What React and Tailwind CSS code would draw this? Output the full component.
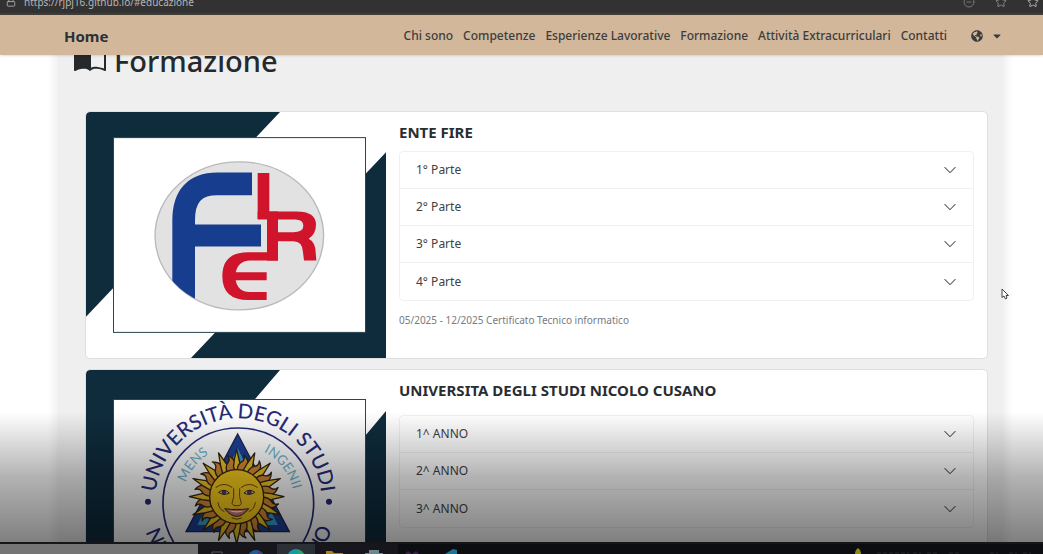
import { BsBookHalf, BsChevronDown } from "react-icons/bs";
import { FaGlobeAmericas, FaCaretDown } from "react-icons/fa";
import { Star, CircleMinus, Lock } from "lucide-react";

const links = [
  "Chi sono",
  "Competenze",
  "Esperienze Lavorative",
  "Formazione",
  "Attività Extracurriculari",
  "Contatti",
];

function AddressBar() {
  return (
    <div className="h-[15px] shrink-0 overflow-hidden border-b-2 border-[#453d33] bg-[#323232] text-[#b5b5b5]">
      <div className="-mt-1.5 flex h-4 items-center pl-1.5 text-[10px] leading-4">
        <Lock className="size-2.5" />
        <span className="ml-2">https://rjpj16.github.io/#educazione</span>
        <CircleMinus className="ml-auto size-3 text-[#777]" />
        <Star className="ml-5 size-3 text-[#888]" />
        <Star className="mr-1 ml-5 size-3" />
      </div>
    </div>
  );
}

function NavBar() {
  return (
    <nav className="relative z-10 flex h-10 shrink-0 items-center bg-[#d2b79b] pt-0.5 pr-10 pl-16 text-[#2b3236] shadow-sm">
      <a href="#home" className="text-[15px] font-bold">
        Home
      </a>
      <div className="ml-auto flex items-center gap-2.5 text-xs font-medium whitespace-nowrap text-[#3b3d3d]">
        {links.map((l) => (
          <a key={l} href="#educazione">
            {l}
          </a>
        ))}
        <button type="button" aria-label="Lingua" className="ml-3.5 flex items-center gap-2">
          <FaGlobeAmericas className="size-3" />
          <FaCaretDown className="size-3" />
        </button>
      </div>
    </nav>
  );
}

function FireImage() {
  return (
    <svg viewBox="0 0 300 245" preserveAspectRatio="none" className="h-[246px] w-[300px] shrink-0" role="img">
      <rect width="300" height="245" fill="#fff" />
      <path d="M0 0H194L0 204Z M300 40V245H105Z" fill="#0f2c3d" />
      <rect x="27.500" y="25.500" width="252" height="194" fill="#fff" stroke="#2c4352" />
      <g transform="scale(0.33333) translate(-18 -21)" fill="none">
        <clipPath id="disc">
          <ellipse cx="478" cy="391" rx="253" ry="221" />
        </clipPath>
        <ellipse cx="478" cy="391" rx="253" ry="221" fill="#e2e2e3" stroke="#b9b9bd" strokeWidth="4" />
        <g clipPath="url(#disc)" stroke="#163d8e">
          <path d="M311 620V345Q311 236 412 236H516" strokeWidth="68" />
          <path d="M311 390H543" strokeWidth="65" />
        </g>
        <g fill="#d0142c">
          <path d="M533 203H568V341H533Z" />
          <path d="M561 318H594V465H561Z" />
          <path d="M533 318H650Q708 318 708 358Q708 385 686 400Q706 410 707 440L709 465H672L669 440Q668 407 640 407H590V380H640Q670 380 670 361Q670 342 645 342H533Z" />
          <path d="M594 440V465H510Q476 465 467 500H560V524H467Q474 560 510 559H560V583H505Q427 583 427 511Q427 440 505 440Z" />
        </g>
      </g>
    </svg>
  );
}

const rays = Array.from({ length: 32 }, (_, i) => i);

function CusanoImage() {
  return (
    <svg viewBox="0 0 300 273" preserveAspectRatio="none" className="h-[273px] w-[300px] shrink-0" role="img">
      <rect width="300" height="273" fill="#fff" />
      <path d="M0 0H194L0 226Z M300 41V273H105Z" fill="#0f2c3d" />
      <rect x="27.500" y="29.500" width="252" height="216" fill="#fff" stroke="#2c4352" />
      <g transform="scale(0.33333) translate(-18 -15)">
        <defs>
          <path id="outer" d="M225 410A250 250 0 0 1 725 410" />
          <path id="lower" d="M183 410A292 292 0 0 0 767 410" />
          <path id="inner" d="M307 410A168 168 0 0 1 643 410" />
        </defs>
        <circle cx="475" cy="415" r="226" fill="none" stroke="#262a78" strokeWidth="5" />
        <g fill="#262a78" fontFamily="Lato, sans-serif" fontSize="61" fontWeight="500">
          <text textAnchor="middle">
            <textPath href="#outer" startOffset="50%">UNIVERSITÀ DEGLI STUDI</textPath>
          </text>
          <text>
            <textPath href="#lower" startOffset="10%">NICCOLÒ</textPath>
          </text>
          <text textAnchor="end">
            <textPath href="#lower" startOffset="91%">CUSANO</textPath>
          </text>
          <circle cx="204" cy="410" r="9" />
          <circle cx="747" cy="410" r="9" />
        </g>
        <g fill="#6fb4cf" fontFamily="Lato, sans-serif" fontSize="40">
          <text>
            <textPath href="#inner" startOffset="11%">MENS</textPath>
          </text>
          <text>
            <textPath href="#inner" startOffset="65%">INGENII</textPath>
          </text>
        </g>
        <path d="M473 207L628 500H318Z" fill="#1d3f96" stroke="#1b2550" strokeWidth="4" />
        <path d="M473 250L502 308H444Z M352 480L372 442L398 480Z M594 480L574 442L548 480Z" fill="#39a0cf" />
        <path d="M473 276L488 308H458Z" fill="#1d3f96" />
        <g transform="translate(470 395)" stroke="#33260f" strokeLinejoin="round">
          {rays.map((i) => (
            <path
              key={i}
              transform={`rotate(${i * 11.25})`}
              d={
                i % 2
                  ? "M-13 -74Q-18 -96 -5 -106Q4 -114 -3 -127Q19 -112 11 -98Q5 -88 13 -74Z"
                  : "M-13 -74L-9 -104L0 -142L9 -104L13 -74Z"
              }
              fill={i % 2 ? "#d98a35" : "#f0c52a"}
              strokeWidth="4"
            />
          ))}
          <circle r="81" fill="#f8cb1d" strokeWidth="4" />
          <g fill="none" strokeWidth="3" strokeLinecap="round" stroke="#6b4811">
            <path d="M-62 -28Q-38 -46 -14 -28M14 -28Q38 -46 62 -28" />
            <path d="M-9 -24Q-6 2 -14 20Q-10 30 0 27Q10 30 14 20Q6 2 9 -24" />
            <path d="M-56 18Q-52 40 -38 44M56 18Q52 40 38 44M-14 64Q0 72 14 64" />
          </g>
          <path d="M-54 -13Q-38 -26 -22 -11Q-38 -2 -54 -13ZM54 -13Q38 -26 22 -11Q38 -2 54 -13Z" fill="#f3e4cb" strokeWidth="3" />
          <circle cx="-38" cy="-13" r="6" fill="#54417a" strokeWidth="2" />
          <circle cx="38" cy="-13" r="6" fill="#54417a" strokeWidth="2" />
          <path d="M-36 36Q-12 40 0 38Q12 40 36 36Q18 59 0 59Q-18 59 -36 36Z" fill="#cf7777" strokeWidth="3" />
          <path d="M-26 41Q0 47 26 41Q0 54 -26 41Z" fill="#fff" stroke="none" />
        </g>
      </g>
    </svg>
  );
}

function Card({ image, title, titleClass, items, note }) {
  return (
    <article className="flex items-start overflow-hidden rounded bg-white outline outline-[#dfdfdf]">
      {image}
      <div className="min-w-0 flex-1 px-[13px] pt-2.5">
        <h3 className={`text-[15px] leading-5 font-bold text-[#2a2d30] ${titleClass}`}>{title}</h3>
        <div className="divide-y divide-black/6 rounded border border-black/6">
          {items.map((t) => (
            <button
              key={t}
              type="button"
              className="flex h-[37px] w-full items-center justify-between px-4 text-xs text-[#3e4145]"
            >
              {t}
              <BsChevronDown className="size-3.5 text-[#555]" />
            </button>
          ))}
        </div>
        {note && <p className="mt-[11px] text-[10px] leading-4 text-[#777b7f]">{note}</p>}
      </div>
    </article>
  );
}

function Taskbar() {
  return (
    <footer className="relative z-10 flex h-3 shrink-0 items-start overflow-hidden border-t-2 border-[#15161a] bg-[#0c0d10]">
      <input aria-label="Cerca" className="h-3 w-[19%] bg-[#757575]" />
      <svg viewBox="0 0 300 10" className="h-2.5 w-[300px] shrink-0">
        <rect width="200" height="10" fill="#17161c" />
        <rect x="79" width="38" height="10" fill="#2b3036" />
        <path d="M14 8H24M14 10V8M24 10V8" stroke="#55565c" fill="none" />
        <circle cx="58" cy="14" r="8" fill="#1d5f94" />
        <path d="M60 7a8 8 0 0 1 6 7h-6Z" fill="#51347d" />
        <circle cx="98" cy="14" r="9" fill="#189aa6" />
        <path d="M100 6a9 9 0 0 1 7 6h-7Z" fill="#30a265" />
        <path d="M128 7h6l2 2h9v3h-17Z" fill="#a9821f" />
        <path d="M167 9h18v3h-18ZM171 9V6h10v3" fill="#6e8790" />
        <path d="M207 10l3-3 4 3 4-3 3 3Z" fill="#36204e" />
        <path d="M247 10l8-5 4 1v5Z" fill="#1c7591" />
      </svg>
      <svg viewBox="0 0 190 10" className="ml-auto h-2.5 w-[190px] shrink-0">
        <path d="M2 10q0-4 3-6q3 2 3 6Z" fill="#8d8a16" />
        <path d="M24 9h32M60 9h8M74 9h10M96 9h10M137 9h8M156 9h8M170 9h8" stroke="#25272a" strokeWidth="1" strokeDasharray="4 2" />
      </svg>
    </footer>
  );
}

export default function App() {
  return (
    <div className="relative flex h-screen flex-col overflow-hidden bg-white font-['Noto_Sans',sans-serif]">
      <AddressBar />
      <NavBar />
      <main className="relative min-h-0 flex-1 overflow-hidden pr-10 pl-[58px]">
        <section className="-mt-3 bg-[#efefef] pr-4 pb-10 pl-7 shadow-[0_0_8px_4px_#efefef]">
          <h2 className="-ml-3 flex h-[69px] items-start gap-2 text-[29px] leading-9 font-medium text-[#25292c]">
            <BsBookHalf className="size-8 shrink-0" />
            Formazione
          </h2>
          <div className="flex flex-col gap-3">
            <Card
              image={<FireImage />}
              title="ENTE FIRE"
              titleClass="mb-[9px]"
              items={["1° Parte", "2° Parte", "3° Parte", "4° Parte"]}
              note="05/2025 - 12/2025 Certificato Tecnico informatico"
            />
            <Card
              image={<CusanoImage />}
              title="UNIVERSITA DEGLI STUDI NICOLO CUSANO"
              titleClass="mb-[15px]"
              items={["1^ ANNO", "2^ ANNO", "3^ ANNO"]}
            />
          </div>
        </section>
        <div className="pointer-events-none absolute inset-x-0 bottom-0 h-[130px] bg-linear-to-b from-black/0 via-black/30 to-black/50" />
      </main>
      <Taskbar />
      <svg viewBox="0 0 8 12" className="absolute top-[52%] right-[34px] h-3 w-2">
        <path d="M1 1V9.500L3 8L4.500 11L6 10L5 7.500H7.500Z" fill="#fff" stroke="#444" />
      </svg>
    </div>
  );
}
